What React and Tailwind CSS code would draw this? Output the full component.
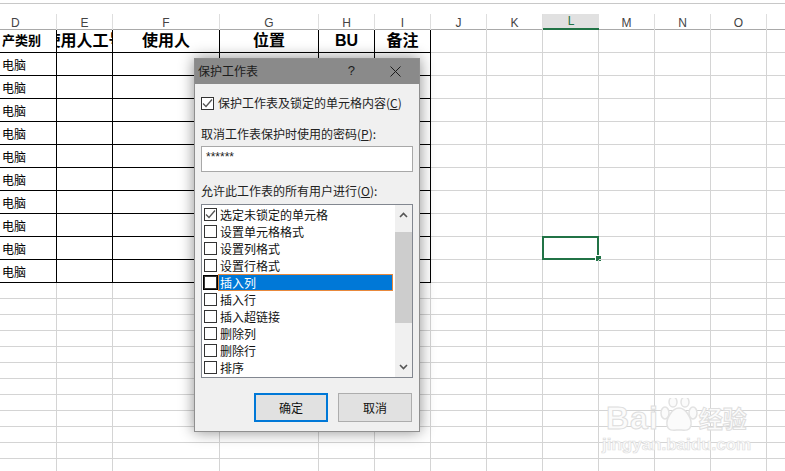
const FONT = '"Liberation Sans", "Noto Sans CJK SC", sans-serif';
const CJK = '"Noto Sans CJK SC", sans-serif';

const widths = [57, 56, 107, 99, 56, 56, 56, 56, 56, 56, 56, 56, 19];
const letters = ['D', 'E', 'F', 'G', 'H', 'I', 'J', 'K', 'L', 'M', 'N', 'O', ''];
const heads = ['产类别', '使用人工号', '使用人', '位置', 'BU', '备注'];
const gridCols = 'grid grid-cols-[57px_56px_107px_99px_56px_56px_56px_56px_56px_56px_56px_56px_19px]';

function ColumnHeader() {
  return (
    <div className={gridCols + ' h-[16px] border-b border-[#a9a9a9]'}>
      {letters.map((l, i) => (
        <div
          key={i}
          className={
            'flex items-center text-[12px] text-[#444] ' +
            (i === 0 ? 'justify-start pl-[11px] ' : 'justify-center ') +
            (l === 'L'
              ? 'bg-[#e1e1e1] border-b-2 border-[#217346] h-[16px] text-[#217346]'
              : i < 12
              ? 'border-r border-[#dedede]'
              : '')
          }
        >
          {l}
        </div>
      ))}
    </div>
  );
}

function Row({ idx, kind, h }) {
  return (
    <div className={gridCols + ' ' + h}>
      {widths.map((_, i) => {
        const inTable = kind !== 'blank' && i < 6;
        const selected = kind === 'data' && idx === 8 && i === 8;
        return (
          <div
            key={i}
            className={
              'relative border-b flex items-center ' +
              (i < 12 ? 'border-r ' : '') +
              (inTable ? 'border-black ' : 'border-[#d4d4d4] ') +
              (selected ? 'overflow-visible ' : 'overflow-hidden ')
            }
          >
            {kind === 'head' && i < 6 && (
              <div
                className={
                  'w-full flex whitespace-nowrap text-black ' +
                  (i === 0
                    ? 'pl-[2px] text-[13px] font-bold'
                    : 'justify-center text-[16px] font-bold')
                }
              >
                <span className="shrink-0">{heads[i]}</span>
              </div>
            )}
            {kind === 'data' && i === 0 && (
              <span className="pl-[2px] pt-[3px] text-[12px] text-black">电脑</span>
            )}
            {selected && (
              <>
                <div className="absolute left-[-1px] top-[-1px] w-[57px] h-[24px] border-2 border-[#217346]" />
                <div className="absolute left-[52px] top-[18px] w-[7px] h-[7px] bg-[#217346] border border-white" />
              </>
            )}
          </div>
        );
      })}
    </div>
  );
}

function Check({ checked, className = '' }) {
  return (
    <span
      className={
        'w-[13px] h-[13px] shrink-0 bg-white border border-[#333] flex items-center justify-center ' +
        className
      }
    >
      {checked && (
        <svg width="11" height="11" viewBox="0 0 11 11" fill="none">
          <path d="M1 5.5L4 8.5L10 1.5" stroke="#555" strokeWidth="1.3" />
        </svg>
      )}
    </span>
  );
}

const items = [
  ['选定未锁定的单元格', true],
  ['设置单元格格式', false],
  ['设置列格式', false],
  ['设置行格式', false],
  ['插入列', false],
  ['插入行', false],
  ['插入超链接', false],
  ['删除列', false],
  ['删除行', false],
  ['排序', false],
];

function ListRow({ label, checked, active }) {
  return (
    <div className="h-[17px] flex items-center pl-[2px]">
      <Check checked={checked} className={active ? 'outline outline-1 outline-black' : ''} />
      {active ? (
        <div className="ml-[1px] w-[175px] h-[17px] bg-[#0078d7] border border-[#e8893c] text-white flex items-center pl-[1px] text-[12px]">
          {label}
        </div>
      ) : (
        <span className="ml-[3px] text-[12px] text-[#111]">{label}</span>
      )}
    </div>
  );
}

function Dialog() {
  return (
    <div
      className="absolute left-[194px] top-[58px] w-[226px] h-[374px] bg-[#f0f0f0] border border-[#8f8f8f] shadow-[0_0_14px_rgba(0,0,0,0.45)] text-[12px] text-[#222]"
      style={{ fontFamily: CJK }}
    >
      <div className="h-[25px] bg-[#8a8a8a] flex items-center pl-[3px] pb-[1px] text-[#1c1c1c] relative">
        <span>保护工作表</span>
        <span className="ml-auto mr-[35px] text-[13px]" style={{ fontFamily: FONT }}>?</span>
        <svg className="mr-[18px]" width="11" height="11" viewBox="0 0 11 11" fill="none">
          <path d="M0.5 0.5L10.5 10.5M10.5 0.5L0.5 10.5" stroke="#1c1c1c" strokeWidth="1" />
        </svg>
      </div>
      <div className="px-[6px]">
        <div className="mt-[11px] flex items-center h-[16px]">
          <Check checked />
          <span className="ml-[4px]">
            保护工作表及锁定的单元格内容(<u>C</u>)
          </span>
        </div>
        <div className="mt-[14px] h-[18px] flex items-center">
          取消工作表保护时使用的密码(<u>P</u>):
        </div>
        <div
          className="mt-[3px] h-[26px] w-[212px] bg-white border border-[#a8a8a8] pl-[4px] pt-[3px] text-[12px] leading-[14px] text-[#222]"
          style={{ fontFamily: FONT }}
        >
          ******
        </div>
        <div className="mt-[10px] h-[18px] flex items-center">
          允许此工作表的所有用户进行(<u>O</u>):
        </div>
        <div className="mt-[4px] w-[212px] h-[174px] bg-white border border-[#828790] flex">
          <div className="flex-1 pt-[1px]">
            {items.map(([label, c], i) => (
              <ListRow key={label} label={label} checked={c} active={i === 4} />
            ))}
          </div>
          <div className="w-[17px] h-full bg-[#f0f0f0] flex flex-col items-center">
            <div className="h-[27px] pb-[7px] flex items-center justify-center w-full">
              <svg width="9" height="6" viewBox="0 0 9 6" fill="none">
                <path d="M1 5L4.5 1.5L8 5" stroke="#555" strokeWidth="1.6" />
              </svg>
            </div>
            <div className="w-full h-[91px] bg-[#cdcdcd]" />
            <div className="mt-auto h-[20px] flex items-center justify-center w-full">
              <svg width="9" height="6" viewBox="0 0 9 6" fill="none">
                <path d="M1 1L4.5 4.5L8 1" stroke="#555" strokeWidth="1.6" />
              </svg>
            </div>
          </div>
        </div>
        <div className="mt-[15px] flex justify-end gap-[10px] pr-[1px]">
          <button className="w-[74px] h-[29px] bg-[#e1e1e1] border-2 border-[#0078d7] text-[#111]">确定</button>
          <button className="w-[74px] h-[29px] bg-[#e1e1e1] border border-[#adadad] text-[#111]">取消</button>
        </div>
      </div>
    </div>
  );
}

function Watermark() {
  const stroke = '[-webkit-text-stroke:1px_#dedede]';
  return (
    <div className="absolute left-[606px] top-[398px] w-[150px] text-[#fbfbfb] pointer-events-none" style={{ fontFamily: FONT }}>
      <div className="flex items-end h-[35px]">
        <span className={'text-[32px] font-bold leading-[30px] tracking-[1px] ' + stroke}>Bai</span>
        <svg className="ml-[1px]" width="38" height="35" viewBox="0 0 38 35" fill="none" stroke="#e2e2e2" strokeWidth="1.5">
          <ellipse cx="5" cy="15" rx="4" ry="6" fill="#fbfbfb" />
          <ellipse cx="13" cy="4" rx="4" ry="5" fill="#fbfbfb" />
          <ellipse cx="25" cy="4" rx="4" ry="5" fill="#fbfbfb" />
          <ellipse cx="33" cy="15" rx="4" ry="6" fill="#fbfbfb" />
          <path d="M19 10C12 10 6 21 7 27C8 34 15 32 19 32C23 32 30 34 31 27C32 21 26 10 19 10Z" fill="#fbfbfb" />
        </svg>
        <span className={'text-[24px] font-bold leading-[30px] ml-[1px] ' + stroke} style={{ fontFamily: CJK }}>经验</span>
      </div>
      <div className="-ml-[4px] mt-[2px] text-[17px] leading-[20px] font-bold whitespace-nowrap [-webkit-text-stroke:0.7px_#dedede]">
        jingyan.baidu.com
      </div>
    </div>
  );
}

export default function App() {
  return (
    <div
      className="relative w-[785px] h-[471px] overflow-hidden bg-white"
      style={{ fontFamily: FONT }}
    >
      <div className="h-[4px] border-b border-[#c8c8c8]" />
      <div className="h-[10px]" />
      <ColumnHeader />
      <Row idx={-1} kind="head" h="h-[23px]" />
      {Array.from({ length: 10 }).map((_, i) => (
        <Row key={i} idx={i} kind="data" h="h-[23px]" />
      ))}
      {Array.from({ length: 12 }).map((_, i) => (
        <Row key={i} idx={i} kind="blank" h="h-[16px]" />
      ))}
      <Watermark />
      <Dialog />
    </div>
  );
}
